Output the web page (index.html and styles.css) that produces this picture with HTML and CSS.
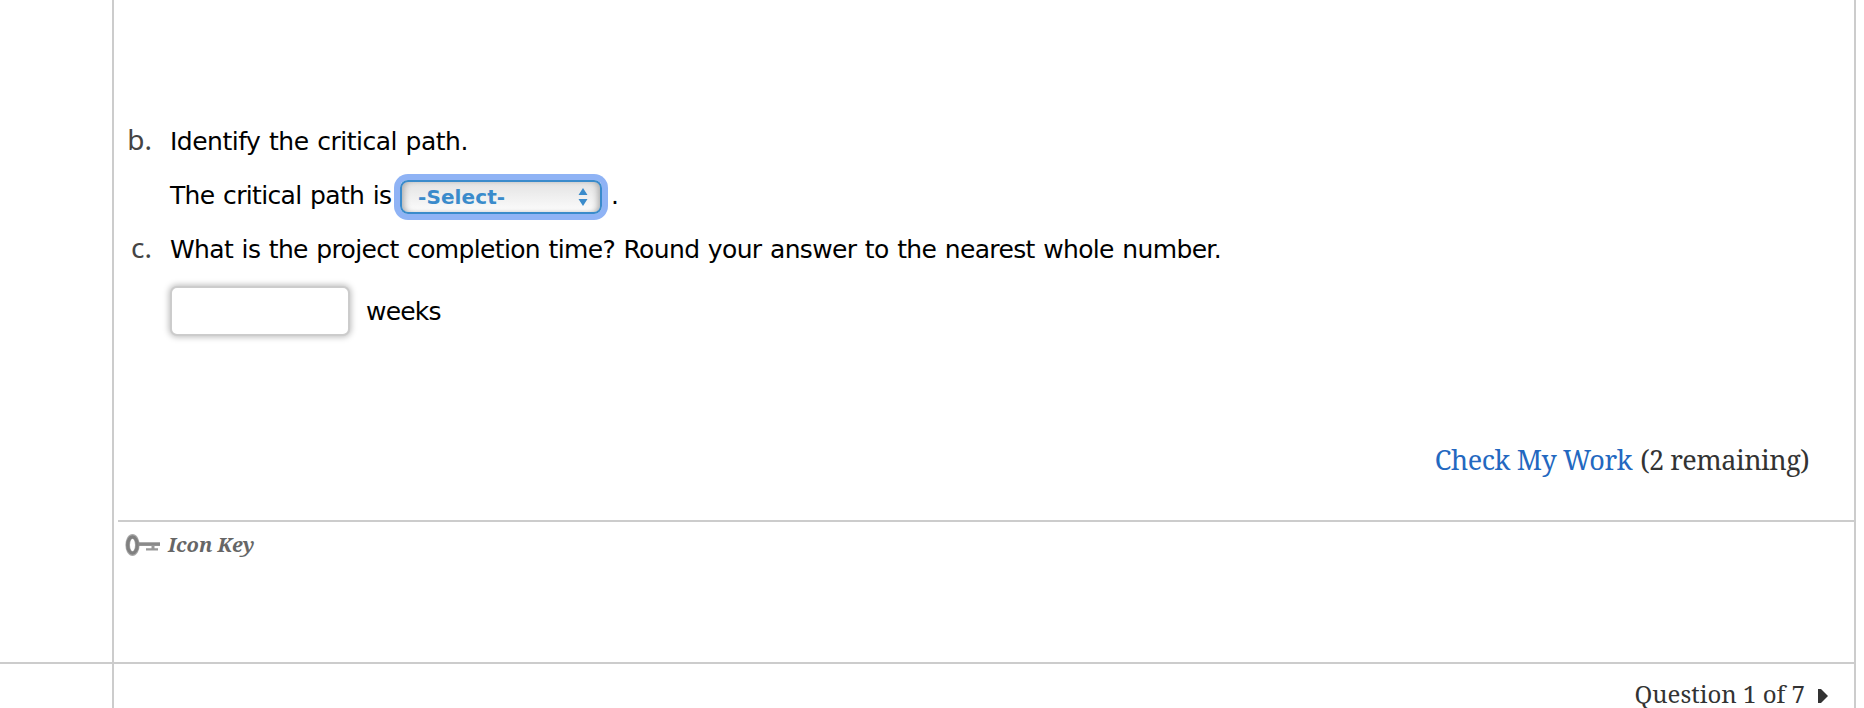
FILE: index.html
```html
<!DOCTYPE html>
<html lang="en">
<head>
<meta charset="utf-8">
<title>Question 1 of 7</title>
<link rel="stylesheet" href="styles.css">
</head>
<body>
<div class="page">
  <div class="upper">
    <aside class="gutter"></aside>
    <main class="content">
      <ol class="parts">
        <li class="part">
          <span class="marker">b.</span>
          <div class="part-body">
            <p class="line"><span class="ask-path">Identify the critical path.</span></p>
            <div class="line answer-line">
              <span class="lead">The critical path is</span>
              <button class="select" type="button"><span>-Select-</span>
                <svg class="arrows" viewBox="0 0 10 18" width="10" height="18"><path d="M5 0L9.5 7H.5zM5 18L.5 11h9z"/></svg>
              </button>
              <span class="stop">.</span>
            </div>
          </div>
        </li>
        <li class="part">
          <span class="marker">c.</span>
          <div class="part-body">
            <p class="line"><span class="ask-time">What is the project completion time? Round your answer to the nearest whole number.</span></p>
            <div class="weeks-line"><input class="field" type="text" aria-label="weeks"><span class="weeks">weeks</span></div>
          </div>
        </li>
      </ol>
      <div class="check"><a class="check-link">Check My Work</a><span class="remaining">(2 remaining)</span></div>
      <div class="key">
        <svg class="key-icon" viewBox="0 0 36 24" width="36" height="24"><ellipse cx="7.5" cy="12" rx="4.8" ry="8.6" fill="none" stroke="#aaa" stroke-width="4.6"/><ellipse cx="7.5" cy="12" rx="4.8" ry="8.2" fill="none" stroke="#808080" stroke-width="3.2"/><path d="M13 9.3h22v3.6H13z" fill="#8a8a8a"/><path d="M21 15.2h12v2.4H21zM26.5 12h3v4h-3z" fill="#999"/></svg>
        <span class="key-text">Icon Key</span>
      </div>
    </main>
  </div>
  <footer class="lower">
    <div class="gutter"></div>
    <div class="pager"><span class="pager-text">Question 1 of 7</span><svg class="next" viewBox="0 0 10 14" width="10" height="14"><path d="M0 0h3l7 7-7 7H0z" fill="#333"/></svg></div>
  </footer>
</div>
</body>
</html>
```
FILE: styles.css
```css
* { box-sizing: border-box; }
body { margin: 0; background: #fff; color: #000; font-family: "DejaVu Sans", sans-serif; overflow: hidden; }
.page { width: 1856px; height: 708px; overflow: hidden; }
.upper { display: flex; height: 664px; border-bottom: 2px solid #ccc; }
.lower { display: flex; height: 44px; }
.gutter { width: 112px; flex: none; }
.content, .pager { flex: 1; border-left: 2px solid #ccc; border-right: 2px solid #ccc; }
.content { display: flex; flex-direction: column; }
.parts { list-style: none; margin: 0; padding: 123px 0 0; height: 430px; flex: none; }
.part { display: flex; }
.marker { width: 38px; flex: none; margin-right: 18px; text-align: right; font: 28px/32px "Noto Sans", sans-serif; color: #444; }
.line { display: flex; align-items: center; height: 54px; margin: 0; padding-bottom: 16px; font-size: 25px; line-height: 38px; letter-spacing: -0.65px; word-spacing: 1.2px; white-space: nowrap; }
.ask-path { letter-spacing: -0.5px; }
.lead { width: 230px; flex: none; }
.select { display: flex; align-items: center; justify-content: space-between; width: 202px; height: 34px; flex: none; margin-top: 2px; padding: 0 12px 0 16px; border: 2px solid #3a8bcb; border-radius: 8px; background: linear-gradient(#e3e3e3, #fcfcfc); box-shadow: 0 0 0 6px #8fb3f5, inset 5px 0 6px -3px #aaa, inset -5px 0 6px -3px #aaa; color: #3a8bcb; font: bold 20px/30px "DejaVu Sans", sans-serif; letter-spacing: 0.1px; }
.arrows { fill: #3a8bcb; }
.stop { margin-left: 9px; }
.weeks-line { display: flex; align-items: center; height: 50px; margin-top: 1px; font-size: 25px; letter-spacing: -0.8px; }
.field { width: 180px; height: 50px; border: 2px solid #ccc; border-radius: 7px; background: #fff; box-shadow: 0 0 6px 1px #bbb; outline: none; }
.weeks { margin-left: 16px; }
.check { display: flex; justify-content: flex-end; height: 90px; flex: none; padding: 10px 45px 0 0; font: 27px/40px "Noto Serif", serif; white-space: nowrap; letter-spacing: -0.4px; }
.check-link { color: #2368c0; margin-right: 8px; }
.remaining { color: #333; letter-spacing: -0.5px; }
.key { display: flex; margin-left: 4px; border-top: 2px solid #ccc; padding: 11px 0 0 7px; }
.key-text { margin-left: 7px; font: italic bold 20px/24px "Noto Serif", "DejaVu Serif", serif; color: #666; }
.pager { display: flex; justify-content: flex-end; padding: 13px 26px 0 0; font: 24px/34px "Noto Serif", "DejaVu Serif", serif; color: #333; }
.pager-text { height: 31px; line-height: 34px; }
.next { margin: 12px 0 0 13px; }
```
